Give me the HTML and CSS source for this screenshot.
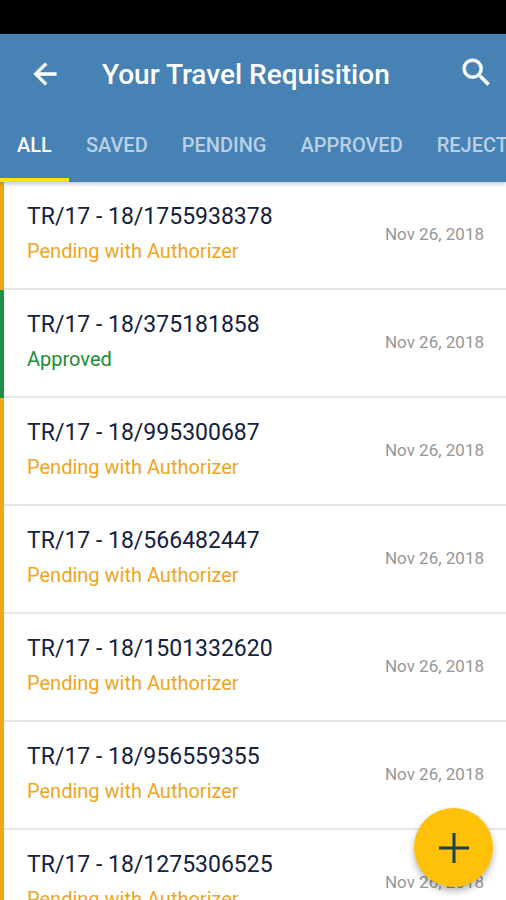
FILE: index.html
```html
<!DOCTYPE html>
<html lang="en">
<head>
    <meta charset="UTF-8">
    <meta name="viewport" content="width=device-width, initial-scale=1.0">
    <title>Your Travel Requisition</title>
    <link rel="stylesheet" href="styles.css">
</head>
<body>
    <div class="status-bar"></div>

    <header class="header">
        <div class="toolbar">
            <button class="icon-btn" type="button" aria-label="Back">
                <svg width="34" height="34" viewBox="0 0 24 24"><path fill="#fff" stroke="#fff" stroke-width=".4" d="M20 11H7.83l5.59-5.59L12 4l-8 8 8 8 1.41-1.41L7.83 13H20v-2z"/></svg>
            </button>
            <h1>Your Travel Requisition</h1>
            <button class="icon-btn search" type="button" aria-label="Search">
                <svg width="37" height="37" viewBox="0 0 24 24"><path fill="#fff" stroke="#fff" stroke-width=".3" d="M15.5 14h-.79l-.28-.27A6.47 6.47 0 0 0 16 9.5 6.5 6.5 0 1 0 9.5 16c1.61 0 3.09-.59 4.23-1.57l.27.28v.79l5 4.99L20.49 19l-4.99-5zm-6 0C7.01 14 5 11.99 5 9.5S7.01 5 9.5 5 14 7.01 14 9.5 11.99 14 9.5 14z"/></svg>
            </button>
        </div>
        <nav class="tabs">
            <button class="tab active" type="button">ALL</button>
            <button class="tab" type="button">SAVED</button>
            <button class="tab" type="button">PENDING</button>
            <button class="tab" type="button">APPROVED</button>
            <button class="tab" type="button">REJECTED</button>
        </nav>
    </header>

    <main class="list">
        <div class="item pending">
            <div class="info">
                <div class="number">TR/17 - 18/1755938378</div>
                <div class="status">Pending with Authorizer</div>
            </div>
            <div class="date">Nov 26, 2018</div>
        </div>
        <div class="item approved">
            <div class="info">
                <div class="number">TR/17 - 18/375181858</div>
                <div class="status">Approved</div>
            </div>
            <div class="date">Nov 26, 2018</div>
        </div>
        <div class="item pending">
            <div class="info">
                <div class="number">TR/17 - 18/995300687</div>
                <div class="status">Pending with Authorizer</div>
            </div>
            <div class="date">Nov 26, 2018</div>
        </div>
        <div class="item pending">
            <div class="info">
                <div class="number">TR/17 - 18/566482447</div>
                <div class="status">Pending with Authorizer</div>
            </div>
            <div class="date">Nov 26, 2018</div>
        </div>
        <div class="item pending">
            <div class="info">
                <div class="number">TR/17 - 18/1501332620</div>
                <div class="status">Pending with Authorizer</div>
            </div>
            <div class="date">Nov 26, 2018</div>
        </div>
        <div class="item pending">
            <div class="info">
                <div class="number">TR/17 - 18/956559355</div>
                <div class="status">Pending with Authorizer</div>
            </div>
            <div class="date">Nov 26, 2018</div>
        </div>
        <div class="item pending">
            <div class="info">
                <div class="number">TR/17 - 18/1275306525</div>
                <div class="status">Pending with Authorizer</div>
            </div>
            <div class="date">Nov 26, 2018</div>
        </div>
    </main>

    <button class="add-btn" type="button" aria-label="Add requisition">
        <svg width="32" height="32" viewBox="0 0 32 32"><path stroke="#17404f" stroke-width="3" d="M16 1v30M1 16h30"/></svg>
    </button>
</body>
</html>
```
FILE: styles.css
```css
* {
    box-sizing: border-box;
}

body {
    font-family: Roboto, "Liberation Sans", sans-serif;
    margin: 0;
    height: 100vh;
    display: flex;
    flex-direction: column;
    overflow: hidden;
    background: #fff;
}

button {
    font-family: inherit;
    border: none;
    background: none;
    padding: 0;
    cursor: pointer;
}

svg {
    display: block;
}

.status-bar {
    flex: none;
    height: 34px;
    background: #000;
}

/* Header */
.header {
    flex: none;
    position: relative;
    z-index: 1;
    background: #4682b4;
    box-shadow: 0 1px 5px rgba(0, 0, 0, 0.3);
}

.toolbar {
    display: flex;
    align-items: center;
    height: 80px;
    padding: 0 11px 0 28px;
}

.toolbar h1 {
    flex: 1;
    margin: 0 0 0 40px;
    font-size: 28px;
    font-weight: 500;
    white-space: nowrap;
    color: #fff;
}

.search {
    padding-bottom: 4px;
}

.tabs {
    display: flex;
    overflow: hidden;
}

.tab {
    flex: none;
    height: 68px;
    padding: 0 17px 2px;
    border-bottom: 4px solid transparent;
    font-size: 20px;
    font-weight: 500;
    color: #b9d0e6;
}

.tab.active {
    color: #fff;
    border-bottom-color: #fde310;
}

/* Requisition list */
.list {
    flex: 1;
    overflow-y: auto;
    scrollbar-width: none;
}

.item {
    display: flex;
    justify-content: space-between;
    align-items: center;
    height: 108px;
    padding: 0 22px 4px 23px;
    border-left: 4px solid;
    background: linear-gradient(#e6e6e6, #e6e6e6) bottom / 100% 2px no-repeat;
}

.item.pending {
    border-left-color: #f0a818;
}

.item.approved {
    border-left-color: #1e9048;
}

.number {
    font-size: 23px;
    line-height: 34px;
    color: #14213f;
}

.status {
    font-size: 20px;
    line-height: 34px;
}

.pending .status {
    color: #eda622;
}

.approved .status {
    color: #1b8c34;
}

.date {
    font-size: 17px;
    color: #969696;
}

/* Floating button */
.add-btn {
    position: fixed;
    right: 13px;
    bottom: 13px;
    z-index: 2;
    display: flex;
    justify-content: center;
    align-items: center;
    width: 79px;
    height: 79px;
    border-radius: 50%;
    background: #ffc107;
    box-shadow: 0 4px 7px rgba(0, 0, 0, 0.3);
}
```
